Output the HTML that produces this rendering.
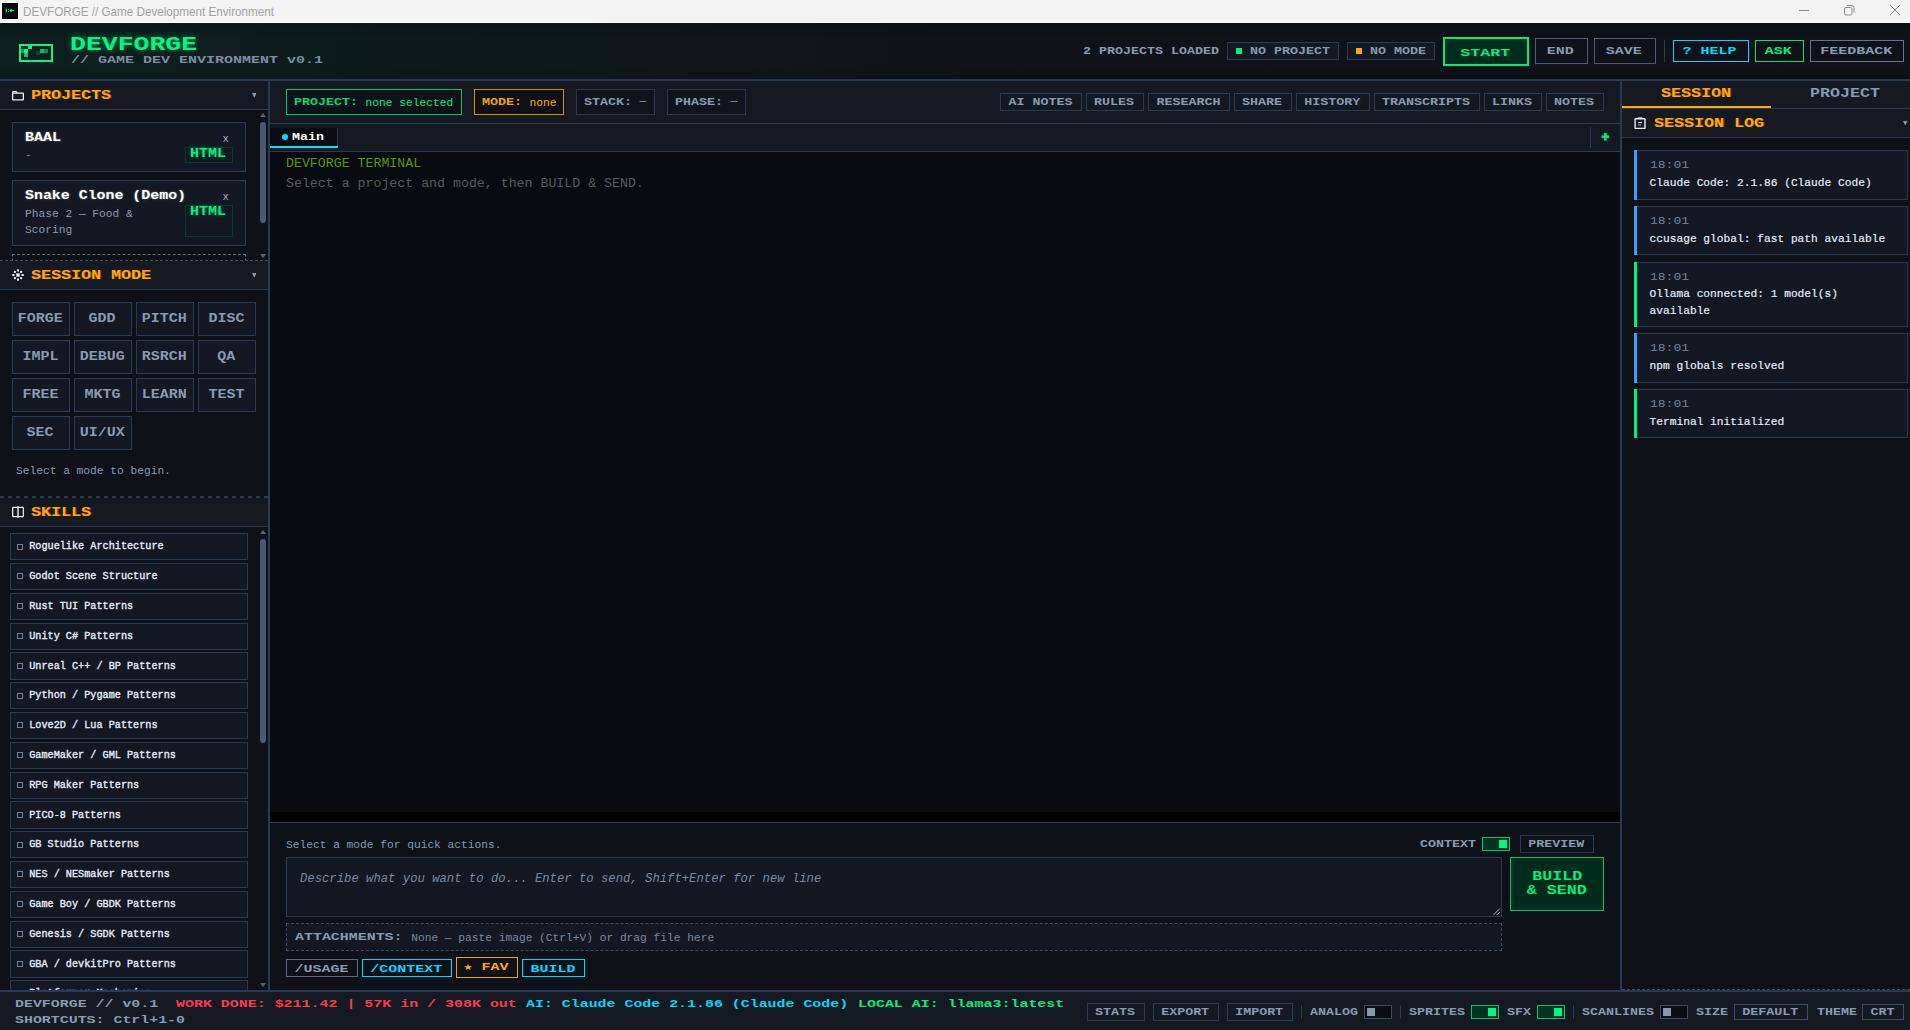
<!DOCTYPE html>
<html lang="en"><head><meta charset="utf-8"><title>DEVFORGE // Game Development Environment</title><style>
html,body{margin:0;padding:0}
body{width:1910px;height:1030px;position:relative;overflow:hidden;background:#0e1118}
.a{position:absolute;box-sizing:content-box}
.p{font-family:"Liberation Mono",monospace;font-weight:bold;white-space:pre;line-height:1;transform-origin:0 50%;display:inline-block}
.p.c{position:static;transform-origin:50% 50%}
.m{font-family:"Liberation Mono",monospace;white-space:pre;line-height:1}
.b{display:flex;align-items:center;justify-content:center}
</style></head>
<body>
<div class="a" style="left:0px;top:0px;width:1910px;height:22px;background:#f3f3f3;"></div>
<div class="a" style="left:0px;top:22px;width:1910px;height:1px;background:#ffffff;"></div>
<div class="a" style="left:2px;top:3px;width:14px;height:14px;background:#0a0b10;border:1px solid #000;box-shadow:0 0 0 1px #fff;"><svg width="14" height="14" viewBox="3 4 14 14" style="display:block"><g fill="#00f080"><rect x="5.7" y="8.7" width="1.3" height="3.5"/><rect x="8" y="8.8" width="1" height="1"/><rect x="8" y="11.1" width="1" height="1"/><path d="M9.3 10.5L11 8.8L12.7 10L14.2 10V11L12.7 11L11 12.2Z"/></g></svg></div>
<span class="a" id="wtitle" style="left:23px;top:4px;font:13.2px/16px 'Liberation Sans',sans-serif;color:#a2a2a2;white-space:pre;transform:scaleX(0.885);transform-origin:0 50%">DEVFORGE // Game Development Environment</span>
<svg class="a" style="left:1795px;top:0" width="115" height="22" viewBox="0 0 115 22" fill="none" stroke="#8a8a8a" stroke-width="1"><path d="M4 10.5h10"/><rect x="49.5" y="7.5" width="7.5" height="7.5" rx="1.5"/><path d="M52 5.5h5a2 2 0 0 1 2 2V12.5"/><path d="M95 5l10 10M105 5l-10 10"/></svg>
<div class="a" style="left:0px;top:23px;width:1910px;height:56px;background:#0f1218;background:linear-gradient(90deg,rgba(0,255,136,0.05) 0%,rgba(0,255,136,0.042) 15%,rgba(0,255,136,0) 52%),linear-gradient(180deg,rgba(0,0,0,0.18),rgba(0,0,0,0) 30%,rgba(0,0,0,0) 75%,rgba(0,0,0,0.12)),#0f1218;"></div>
<div class="a" style="left:0px;top:79px;width:1910px;height:2px;background:#2a3a50;"></div>
<svg class="a" style="left:19px;top:44px" width="34" height="18" viewBox="0 0 34 18"><rect x="1" y="1" width="32" height="16" fill="none" stroke="#00fa85" stroke-width="2"/><rect x="9" y="2" width="4" height="3" fill="#00fa85"/><rect x="5" y="5" width="4" height="4" fill="#00fa85"/><rect x="2" y="5" width="3" height="4" fill="#00a85c"/><rect x="5" y="9" width="4" height="4" fill="#00c86e"/><rect x="17" y="7" width="4" height="4" fill="#00482a"/><rect x="21" y="5" width="4" height="4" fill="#00c06a"/><rect x="25" y="5" width="4" height="4" fill="#008e4e"/></svg>
<span class="a p" style="left:69.6px;top:35.12px;font-size:20.34px;color:#00f882;transform:scaleX(1.3024);text-shadow:0 0 6px rgba(0,255,136,.45);">DEVFORGE</span>
<span class="a p" style="left:70.6px;top:55.16px;font-size:10.63px;color:#7d8ca4;transform:scaleX(1.4113);">// GAME DEV ENVIRONMENT v0.1</span>
<span class="a p" style="left:1083px;top:45.86px;font-size:10.63px;color:#8a9ab0;transform:scaleX(1.2545);">2 PROJECTS LOADED</span>
<div class="a" style="left:1227px;top:42px;width:110px;height:16px;background:#141922;border:1px solid #2a3a50;"></div>
<div class="a" style="left:1236px;top:48px;width:6px;height:6px;background:#00f07c;"></div>
<span class="a p" style="left:1250px;top:45.86px;font-size:10.63px;color:#8a9ab0;transform:scaleX(1.2545);">NO PROJECT</span>
<div class="a" style="left:1347px;top:42px;width:86px;height:16px;background:#141922;border:1px solid #2a3a50;"></div>
<div class="a" style="left:1356px;top:48px;width:6px;height:6px;background:#ffaa00;"></div>
<span class="a p" style="left:1370px;top:45.86px;font-size:10.63px;color:#8a9ab0;transform:scaleX(1.2545);">NO MODE</span>
<div class="a b" style="left:1443px;top:37px;width:82px;height:25px;background:#012c1d;border:2px solid #00ec7a;"><span class="p c" style="font-size:11.54px;color:#00f07c;transform:scaleX(1.4443);position:relative;left:-0.6px;top:1.1px;">START</span></div>
<div class="a b" style="left:1535px;top:38px;width:51px;height:24px;background:transparent;border:1px solid #4c5b72;"><span class="p c" style="font-size:11.39px;color:#8a9ab0;transform:scaleX(1.3172);position:relative;left:-1.2px;top:1px;">END</span></div>
<div class="a b" style="left:1594px;top:38px;width:60px;height:24px;background:transparent;border:1px solid #4c5b72;"><span class="p c" style="font-size:11.39px;color:#8a9ab0;transform:scaleX(1.3172);position:relative;left:-1.2px;top:1px;">SAVE</span></div>
<div class="a" style="left:1664px;top:40px;width:1px;height:22px;background:#2a3a50;"></div>
<div class="a b" style="left:1673px;top:40px;width:74px;height:20px;background:transparent;border:1px solid #00d8ff;"><span class="p c" style="font-size:11.39px;color:#00d8ff;transform:scaleX(1.3172);position:relative;left:-1.2px;top:1px;">? HELP</span></div>
<div class="a b" style="left:1755px;top:40px;width:47px;height:20px;background:transparent;border:1px solid #00e676;"><span class="p c" style="font-size:11.39px;color:#00f07c;transform:scaleX(1.3172);position:relative;left:-1.2px;top:1px;">ASK</span></div>
<div class="a b" style="left:1810px;top:40px;width:92px;height:20px;background:transparent;border:1px solid #66758c;"><span class="p c" style="font-size:11.39px;color:#8a9ab0;transform:scaleX(1.3172);position:relative;left:-1.2px;top:1px;">FEEDBACK</span></div>
<div class="a" style="left:0px;top:81px;width:268px;height:909px;background:#0e1118;"></div>
<div class="a" style="left:268px;top:81px;width:2px;height:909px;background:#2a3a50;"></div>
<div class="a" style="left:0px;top:81px;width:268px;height:28px;background:#141922;"></div>
<div class="a" style="left:0px;top:109px;width:268px;height:1px;background:#2a3a50;"></div>
<svg class="a" style="left:11px;top:90px" width="14" height="12" viewBox="0 0 14 12" fill="none" stroke="#e8edf7" stroke-width="1.3"><rect x="1.65" y="3.15" width="10.7" height="6.8" rx="0.5"/><path d="M1.65 3.2V2.1Q1.65 1.6 2.2 1.6H5.2L6.3 3" stroke-width="1.1"/></svg>
<span class="a p" style="left:31px;top:89.71px;font-size:11.99px;color:#ffaa00;transform:scaleX(1.3894);text-shadow:0.7px 0.4px 0 rgba(205,70,0,.7);">PROJECTS</span>
<svg class="a" style="left:251.5px;top:93.3px" width="4.6" height="4.8" viewBox="0 0 5 5" preserveAspectRatio="none"><path d="M0 0h5L2.5 5z" fill="#8796ad"/></svg>
<div class="a" style="left:12px;top:122px;width:232px;height:48px;background:#141822;border:1px solid #2a3a50;"></div>
<span class="a p" style="left:24.5px;top:132.00px;font-size:12.15px;color:#ffffff;transform:scaleX(1.2349);text-shadow:0 0 2px rgba(255,255,255,.4);">BAAL</span>
<span class="a m " style="left:25px;top:150.00px;font-size:11.22px;color:#7a8aa0;">-</span>
<span class="a m " style="left:222.6px;top:133.96px;font-size:10.5px;color:#a8b4c8;">x</span>
<div class="a" style="left:185px;top:147px;width:46px;height:14px;border:1px solid #0a3a28;"></div>
<span class="a p" style="left:190.3px;top:147.80px;font-size:12.15px;color:#00f07c;transform:scaleX(1.2349);text-shadow:0 0 3px rgba(0,255,136,.4);">HTML</span>
<div class="a" style="left:12px;top:180px;width:232px;height:64px;background:#141822;border:1px solid #2a3a50;"></div>
<span class="a p" style="left:24.5px;top:189.80px;font-size:12.15px;color:#ffffff;transform:scaleX(1.2280);text-shadow:0 0 2px rgba(255,255,255,.4);">Snake Clone (Demo)</span>
<span class="a m " style="left:25px;top:208.60px;font-size:11.22px;color:#8a9ab0;">Phase 2 — Food &amp;</span>
<span class="a m " style="left:25px;top:224.60px;font-size:11.22px;color:#8a9ab0;">Scoring</span>
<span class="a m " style="left:222.6px;top:191.96px;font-size:10.5px;color:#a8b4c8;">x</span>
<div class="a" style="left:185px;top:205px;width:46px;height:30px;border:1px solid #0a3a28;"></div>
<span class="a p" style="left:190.3px;top:205.80px;font-size:12.15px;color:#00f07c;transform:scaleX(1.2349);text-shadow:0 0 3px rgba(0,255,136,.4);">HTML</span>
<div class="a" style="left:12px;top:254px;width:232px;height:6px;border:1px dashed #5a6a82;border-bottom:none;"></div>
<svg class="a" style="left:260px;top:113px" width="6" height="4" viewBox="0 0 6 4"><path d="M0 4L3 0L6 4z" fill="#55637a"/></svg>
<div class="a" style="left:260px;top:122px;width:6px;height:101px;background:#4b586e;border-radius:3px;"></div>
<svg class="a" style="left:260px;top:253.5px" width="6" height="4" viewBox="0 0 6 4"><path d="M0 0h6L3 4z" fill="#55637a"/></svg>
<div class="a" style="left:0px;top:260px;width:268px;height:0px;border-top:1px dashed #3a4a62;"></div>
<div class="a" style="left:0px;top:261px;width:268px;height:28px;background:#141922;"></div>
<div class="a" style="left:0px;top:289px;width:268px;height:1px;background:#2a3a50;"></div>
<svg class="a" style="left:12px;top:269px" width="12" height="12" viewBox="0 0 12 12" fill="#e8edf7"><rect x="4.3" y="4.3" width="3.4" height="3.4" fill="#ffffff"/><rect x="5" y="0.3" width="2" height="2.2"/><rect x="5" y="9.5" width="2" height="2.2"/><rect x="0.3" y="5" width="2.2" height="2"/><rect x="9.5" y="5" width="2.2" height="2"/><rect x="1.9" y="1.9" width="2" height="2"/><rect x="8.1" y="1.9" width="2" height="2"/><rect x="1.9" y="8.1" width="2" height="2"/><rect x="8.1" y="8.1" width="2" height="2"/></svg>
<span class="a p" style="left:31px;top:269.71px;font-size:11.99px;color:#ffaa00;transform:scaleX(1.3894);text-shadow:0.7px 0.4px 0 rgba(205,70,0,.7);">SESSION MODE</span>
<svg class="a" style="left:251.5px;top:273.3px" width="4.6" height="4.8" viewBox="0 0 5 5" preserveAspectRatio="none"><path d="M0 0h5L2.5 5z" fill="#8796ad"/></svg>
<div class="a b" style="left:12px;top:302px;width:56px;height:32px;background:#141822;border:1px solid #2a3a50;"><span class="p c" style="font-size:12.15px;color:#8a9ab0;transform:scaleX(1.2349);position:relative;left:-0.8px;top:0px;">FORGE</span></div>
<div class="a b" style="left:74px;top:302px;width:56px;height:32px;background:#141822;border:1px solid #2a3a50;"><span class="p c" style="font-size:12.15px;color:#8a9ab0;transform:scaleX(1.2349);position:relative;left:-0.8px;top:0px;">GDD</span></div>
<div class="a b" style="left:136px;top:302px;width:56px;height:32px;background:#141822;border:1px solid #2a3a50;"><span class="p c" style="font-size:12.15px;color:#8a9ab0;transform:scaleX(1.2349);position:relative;left:-0.8px;top:0px;">PITCH</span></div>
<div class="a b" style="left:198px;top:302px;width:56px;height:32px;background:#141822;border:1px solid #2a3a50;"><span class="p c" style="font-size:12.15px;color:#8a9ab0;transform:scaleX(1.2349);position:relative;left:-0.8px;top:0px;">DISC</span></div>
<div class="a b" style="left:12px;top:340px;width:56px;height:32px;background:#141822;border:1px solid #2a3a50;"><span class="p c" style="font-size:12.15px;color:#8a9ab0;transform:scaleX(1.2349);position:relative;left:-0.8px;top:0px;">IMPL</span></div>
<div class="a b" style="left:74px;top:340px;width:56px;height:32px;background:#141822;border:1px solid #2a3a50;"><span class="p c" style="font-size:12.15px;color:#8a9ab0;transform:scaleX(1.2349);position:relative;left:-0.8px;top:0px;">DEBUG</span></div>
<div class="a b" style="left:136px;top:340px;width:56px;height:32px;background:#141822;border:1px solid #2a3a50;"><span class="p c" style="font-size:12.15px;color:#8a9ab0;transform:scaleX(1.2349);position:relative;left:-0.8px;top:0px;">RSRCH</span></div>
<div class="a b" style="left:198px;top:340px;width:56px;height:32px;background:#141822;border:1px solid #2a3a50;"><span class="p c" style="font-size:12.15px;color:#8a9ab0;transform:scaleX(1.2349);position:relative;left:-0.8px;top:0px;">QA</span></div>
<div class="a b" style="left:12px;top:378px;width:56px;height:32px;background:#141822;border:1px solid #2a3a50;"><span class="p c" style="font-size:12.15px;color:#8a9ab0;transform:scaleX(1.2349);position:relative;left:-0.8px;top:0px;">FREE</span></div>
<div class="a b" style="left:74px;top:378px;width:56px;height:32px;background:#141822;border:1px solid #2a3a50;"><span class="p c" style="font-size:12.15px;color:#8a9ab0;transform:scaleX(1.2349);position:relative;left:-0.8px;top:0px;">MKTG</span></div>
<div class="a b" style="left:136px;top:378px;width:56px;height:32px;background:#141822;border:1px solid #2a3a50;"><span class="p c" style="font-size:12.15px;color:#8a9ab0;transform:scaleX(1.2349);position:relative;left:-0.8px;top:0px;">LEARN</span></div>
<div class="a b" style="left:198px;top:378px;width:56px;height:32px;background:#141822;border:1px solid #2a3a50;"><span class="p c" style="font-size:12.15px;color:#8a9ab0;transform:scaleX(1.2349);position:relative;left:-0.8px;top:0px;">TEST</span></div>
<div class="a b" style="left:12px;top:416px;width:56px;height:32px;background:#141822;border:1px solid #2a3a50;"><span class="p c" style="font-size:12.15px;color:#8a9ab0;transform:scaleX(1.2349);position:relative;left:-0.8px;top:0px;">SEC</span></div>
<div class="a b" style="left:74px;top:416px;width:56px;height:32px;background:#141822;border:1px solid #2a3a50;"><span class="p c" style="font-size:12.15px;color:#8a9ab0;transform:scaleX(1.2349);position:relative;left:-0.8px;top:0px;">UI/UX</span></div>
<span class="a m " style="left:16px;top:465.70px;font-size:11.22px;color:#8a9ab0;">Select a mode to begin.</span>
<div class="a" style="left:0px;top:496px;width:268px;height:2px;background:repeating-linear-gradient(90deg,#2a3a50 0,#2a3a50 4px,transparent 4px,transparent 8px);"></div>
<div class="a" style="left:0px;top:498px;width:268px;height:28px;background:#141922;"></div>
<div class="a" style="left:0px;top:526px;width:268px;height:1px;background:#2a3a50;"></div>
<svg class="a" style="left:11px;top:505px" width="14" height="14" viewBox="0 0 14 14" fill="none" stroke="#e8edf7" stroke-width="1.3"><rect x="1.65" y="2.45" width="10.7" height="9.1" rx="0.6"/><path d="M7 1.3V12.7" stroke="#f0f4ff" stroke-width="1.4"/></svg>
<span class="a p" style="left:31px;top:506.71px;font-size:11.99px;color:#ffaa00;transform:scaleX(1.3894);text-shadow:0.7px 0.4px 0 rgba(205,70,0,.7);">SKILLS</span>
<div class="a" style="left:0;top:527px;width:268px;height:463px;overflow:hidden">
<div class="a" style="left:10px;top:6.20px;width:236px;height:25.2px;background:#141822;border:1px solid #2a3a50"></div>
<div class="a" style="left:17px;top:16.50px;width:4px;height:4px;border:1px solid #77859c"></div>
<span class="a m" style="left:29.2px;top:15.39px;font-size:10.2px;color:#e4ebf8;-webkit-text-stroke:0.35px #e4ebf8">Roguelike Architecture</span>
<div class="a" style="left:10px;top:36.00px;width:236px;height:25.2px;background:#141822;border:1px solid #2a3a50"></div>
<div class="a" style="left:17px;top:46.30px;width:4px;height:4px;border:1px solid #77859c"></div>
<span class="a m" style="left:29.2px;top:45.19px;font-size:10.2px;color:#e4ebf8;-webkit-text-stroke:0.35px #e4ebf8">Godot Scene Structure</span>
<div class="a" style="left:10px;top:65.80px;width:236px;height:25.2px;background:#141822;border:1px solid #2a3a50"></div>
<div class="a" style="left:17px;top:76.10px;width:4px;height:4px;border:1px solid #77859c"></div>
<span class="a m" style="left:29.2px;top:74.99px;font-size:10.2px;color:#e4ebf8;-webkit-text-stroke:0.35px #e4ebf8">Rust TUI Patterns</span>
<div class="a" style="left:10px;top:95.60px;width:236px;height:25.2px;background:#141822;border:1px solid #2a3a50"></div>
<div class="a" style="left:17px;top:105.90px;width:4px;height:4px;border:1px solid #77859c"></div>
<span class="a m" style="left:29.2px;top:104.79px;font-size:10.2px;color:#e4ebf8;-webkit-text-stroke:0.35px #e4ebf8">Unity C# Patterns</span>
<div class="a" style="left:10px;top:125.40px;width:236px;height:25.2px;background:#141822;border:1px solid #2a3a50"></div>
<div class="a" style="left:17px;top:135.70px;width:4px;height:4px;border:1px solid #77859c"></div>
<span class="a m" style="left:29.2px;top:134.59px;font-size:10.2px;color:#e4ebf8;-webkit-text-stroke:0.35px #e4ebf8">Unreal C++ / BP Patterns</span>
<div class="a" style="left:10px;top:155.20px;width:236px;height:25.2px;background:#141822;border:1px solid #2a3a50"></div>
<div class="a" style="left:17px;top:165.50px;width:4px;height:4px;border:1px solid #77859c"></div>
<span class="a m" style="left:29.2px;top:164.39px;font-size:10.2px;color:#e4ebf8;-webkit-text-stroke:0.35px #e4ebf8">Python / Pygame Patterns</span>
<div class="a" style="left:10px;top:185.00px;width:236px;height:25.2px;background:#141822;border:1px solid #2a3a50"></div>
<div class="a" style="left:17px;top:195.30px;width:4px;height:4px;border:1px solid #77859c"></div>
<span class="a m" style="left:29.2px;top:194.19px;font-size:10.2px;color:#e4ebf8;-webkit-text-stroke:0.35px #e4ebf8">Love2D / Lua Patterns</span>
<div class="a" style="left:10px;top:214.80px;width:236px;height:25.2px;background:#141822;border:1px solid #2a3a50"></div>
<div class="a" style="left:17px;top:225.10px;width:4px;height:4px;border:1px solid #77859c"></div>
<span class="a m" style="left:29.2px;top:223.99px;font-size:10.2px;color:#e4ebf8;-webkit-text-stroke:0.35px #e4ebf8">GameMaker / GML Patterns</span>
<div class="a" style="left:10px;top:244.60px;width:236px;height:25.2px;background:#141822;border:1px solid #2a3a50"></div>
<div class="a" style="left:17px;top:254.90px;width:4px;height:4px;border:1px solid #77859c"></div>
<span class="a m" style="left:29.2px;top:253.79px;font-size:10.2px;color:#e4ebf8;-webkit-text-stroke:0.35px #e4ebf8">RPG Maker Patterns</span>
<div class="a" style="left:10px;top:274.40px;width:236px;height:25.2px;background:#141822;border:1px solid #2a3a50"></div>
<div class="a" style="left:17px;top:284.70px;width:4px;height:4px;border:1px solid #77859c"></div>
<span class="a m" style="left:29.2px;top:283.59px;font-size:10.2px;color:#e4ebf8;-webkit-text-stroke:0.35px #e4ebf8">PICO-8 Patterns</span>
<div class="a" style="left:10px;top:304.20px;width:236px;height:25.2px;background:#141822;border:1px solid #2a3a50"></div>
<div class="a" style="left:17px;top:314.50px;width:4px;height:4px;border:1px solid #77859c"></div>
<span class="a m" style="left:29.2px;top:313.39px;font-size:10.2px;color:#e4ebf8;-webkit-text-stroke:0.35px #e4ebf8">GB Studio Patterns</span>
<div class="a" style="left:10px;top:334.00px;width:236px;height:25.2px;background:#141822;border:1px solid #2a3a50"></div>
<div class="a" style="left:17px;top:344.30px;width:4px;height:4px;border:1px solid #77859c"></div>
<span class="a m" style="left:29.2px;top:343.19px;font-size:10.2px;color:#e4ebf8;-webkit-text-stroke:0.35px #e4ebf8">NES / NESmaker Patterns</span>
<div class="a" style="left:10px;top:363.80px;width:236px;height:25.2px;background:#141822;border:1px solid #2a3a50"></div>
<div class="a" style="left:17px;top:374.10px;width:4px;height:4px;border:1px solid #77859c"></div>
<span class="a m" style="left:29.2px;top:372.99px;font-size:10.2px;color:#e4ebf8;-webkit-text-stroke:0.35px #e4ebf8">Game Boy / GBDK Patterns</span>
<div class="a" style="left:10px;top:393.60px;width:236px;height:25.2px;background:#141822;border:1px solid #2a3a50"></div>
<div class="a" style="left:17px;top:403.90px;width:4px;height:4px;border:1px solid #77859c"></div>
<span class="a m" style="left:29.2px;top:402.79px;font-size:10.2px;color:#e4ebf8;-webkit-text-stroke:0.35px #e4ebf8">Genesis / SGDK Patterns</span>
<div class="a" style="left:10px;top:423.40px;width:236px;height:25.2px;background:#141822;border:1px solid #2a3a50"></div>
<div class="a" style="left:17px;top:433.70px;width:4px;height:4px;border:1px solid #77859c"></div>
<span class="a m" style="left:29.2px;top:432.59px;font-size:10.2px;color:#e4ebf8;-webkit-text-stroke:0.35px #e4ebf8">GBA / devkitPro Patterns</span>
<div class="a" style="left:10px;top:453.20px;width:236px;height:25.2px;background:#141822;border:1px solid #2a3a50"></div>
<div class="a" style="left:17px;top:463.50px;width:4px;height:4px;border:1px solid #77859c"></div>
<span class="a m" style="left:29.2px;top:462.39px;font-size:10.2px;color:#e4ebf8;-webkit-text-stroke:0.35px #e4ebf8">Platformer Mechanics</span>
</div>
<svg class="a" style="left:260px;top:530px" width="6" height="4" viewBox="0 0 6 4"><path d="M0 4L3 0L6 4z" fill="#55637a"/></svg>
<div class="a" style="left:260px;top:539px;width:6px;height:204px;background:#4b586e;border-radius:3px;"></div>
<svg class="a" style="left:260px;top:983px" width="6" height="4" viewBox="0 0 6 4"><path d="M0 0h6L3 4z" fill="#55637a"/></svg>
<div class="a" style="left:270px;top:81px;width:1350px;height:42px;background:#141922;"></div>
<div class="a" style="left:270px;top:123px;width:1350px;height:1px;background:#2a3a50;"></div>
<div class="a" style="left:286px;top:89px;width:174px;height:24px;border:1px solid #00c46a;background:#0e1117"></div>
<span class="a p" style="left:294px;top:97.16px;font-size:10.63px;color:#00d873;transform:scaleX(1.2545);">PROJECT:</span>
<span class="a m " style="left:365.6px;top:97.80px;font-size:11.22px;color:#00f07c;">none selected</span>
<div class="a" style="left:474px;top:89px;width:88px;height:24px;border:1px solid #d88a08;background:#0f1116"></div>
<span class="a p" style="left:482px;top:97.16px;font-size:10.63px;color:#f0a000;transform:scaleX(1.2545);">MODE:</span>
<span class="a m " style="left:529.6px;top:97.80px;font-size:11.22px;color:#ffaa00;">none</span>
<div class="a" style="left:576px;top:89px;width:77px;height:24px;border:1px solid #2a3a50;background:#10141c"></div>
<span class="a p" style="left:584px;top:97.16px;font-size:10.63px;color:#8a9ab0;transform:scaleX(1.2545);">STACK:</span>
<span class="a m " style="left:639.6px;top:96.20px;font-size:11.22px;color:#8a9ab0;">—</span>
<div class="a" style="left:667px;top:89px;width:77px;height:24px;border:1px solid #2a3a50;background:#10141c"></div>
<span class="a p" style="left:675px;top:97.16px;font-size:10.63px;color:#8a9ab0;transform:scaleX(1.2545);">PHASE:</span>
<span class="a m " style="left:730.6px;top:96.20px;font-size:11.22px;color:#8a9ab0;">—</span>
<div class="a b" style="left:1000px;top:93px;width:80px;height:16px;background:#131821;border:1px solid #2a3a50;"><span class="p c" style="font-size:10.63px;color:#8a9ab0;transform:scaleX(1.2545);position:relative;left:-0.8px;top:0px;">AI NOTES</span></div>
<div class="a b" style="left:1086px;top:93px;width:56px;height:16px;background:#131821;border:1px solid #2a3a50;"><span class="p c" style="font-size:10.63px;color:#8a9ab0;transform:scaleX(1.2545);position:relative;left:-0.8px;top:0px;">RULES</span></div>
<div class="a b" style="left:1148px;top:93px;width:80px;height:16px;background:#131821;border:1px solid #2a3a50;"><span class="p c" style="font-size:10.63px;color:#8a9ab0;transform:scaleX(1.2545);position:relative;left:-0.8px;top:0px;">RESEARCH</span></div>
<div class="a b" style="left:1234px;top:93px;width:56px;height:16px;background:#131821;border:1px solid #2a3a50;"><span class="p c" style="font-size:10.63px;color:#8a9ab0;transform:scaleX(1.2545);position:relative;left:-0.8px;top:0px;">SHARE</span></div>
<div class="a b" style="left:1296px;top:93px;width:72px;height:16px;background:#131821;border:1px solid #2a3a50;"><span class="p c" style="font-size:10.63px;color:#8a9ab0;transform:scaleX(1.2545);position:relative;left:-0.8px;top:0px;">HISTORY</span></div>
<div class="a b" style="left:1374px;top:93px;width:104px;height:16px;background:#131821;border:1px solid #2a3a50;"><span class="p c" style="font-size:10.63px;color:#8a9ab0;transform:scaleX(1.2545);position:relative;left:-0.8px;top:0px;">TRANSCRIPTS</span></div>
<div class="a b" style="left:1484px;top:93px;width:56px;height:16px;background:#131821;border:1px solid #2a3a50;"><span class="p c" style="font-size:10.63px;color:#8a9ab0;transform:scaleX(1.2545);position:relative;left:-0.8px;top:0px;">LINKS</span></div>
<div class="a b" style="left:1546px;top:93px;width:56px;height:16px;background:#131821;border:1px solid #2a3a50;"><span class="p c" style="font-size:10.63px;color:#8a9ab0;transform:scaleX(1.2545);position:relative;left:-0.8px;top:0px;">NOTES</span></div>
<div class="a" style="left:270px;top:124px;width:1350px;height:27px;background:#141922;"></div>
<div class="a" style="left:270px;top:151px;width:1350px;height:1px;background:#2a3a50;"></div>
<div class="a" style="left:270px;top:128px;width:67px;height:18px;background:#0a0c11;"></div>
<div class="a" style="left:337px;top:128px;width:1px;height:20px;background:#2a3a50;"></div>
<div class="a" style="left:270px;top:146px;width:68px;height:2px;background:#00e0ff;"></div>
<div class="a" style="left:282px;top:134px;width:6px;height:6px;background:#00dcff;border-radius:50%;"></div>
<span class="a p" style="left:291.6px;top:131.86px;font-size:10.63px;color:#ffffff;transform:scaleX(1.2545);">Main</span>
<div class="a" style="left:1590px;top:127px;width:1px;height:21px;background:#2a3a50;"></div>
<span class="a m" style="left:1601.4px;top:131.1px;font-size:13px;font-weight:bold;color:#00f07c;-webkit-text-stroke:0.9px #00f07c">+</span>
<div class="a" style="left:270px;top:152px;width:1350px;height:660px;background:#0a0b10;"></div>
<span class="a m " style="left:286px;top:156.85px;font-size:13.25px;color:#4f9a14;">DEVFORGE TERMINAL</span>
<span class="a m " style="left:286px;top:176.85px;font-size:13.25px;color:#5a5a5a;">Select a project and mode, then BUILD &amp; SEND.</span>
<div class="a" style="left:270px;top:812px;width:1350px;height:10px;background:#000000;"></div>
<div class="a" style="left:270px;top:822px;width:1350px;height:1px;background:#2a3a50;"></div>
<div class="a" style="left:270px;top:823px;width:1350px;height:167px;background:#0e1118;"></div>
<span class="a m " style="left:286px;top:839.70px;font-size:11.22px;color:#8a9ab0;">Select a mode for quick actions.</span>
<span class="a p" style="left:1419.5px;top:838.86px;font-size:10.63px;color:#8a9ab0;transform:scaleX(1.2545);">CONTEXT</span>
<div class="a" style="left:1482px;top:837px;width:26px;height:12px;background:#003322;border:1px solid #00c868;"></div>
<div class="a" style="left:1499px;top:840px;width:8px;height:8px;background:#00f882;"></div>
<div class="a b" style="left:1520px;top:835px;width:72px;height:16px;background:transparent;border:1px solid #2a3a50;"><span class="p c" style="font-size:10.63px;color:#8a9ab0;transform:scaleX(1.2545);position:relative;left:-0.8px;top:0px;">PREVIEW</span></div>
<div class="a" style="left:286px;top:857px;width:1214px;height:58px;background:#141822;border:1px solid #2a3a50;"></div>
<span class="a m " style="left:300px;top:872.62px;font-size:12.24px;color:#7a8aa0;font-style:italic;">Describe what you want to do... Enter to send, Shift+Enter for new line</span>
<svg class="a" style="left:1492px;top:907px" width="8" height="8" viewBox="0 0 8 8" stroke="#b8c2d2" stroke-width="1"><path d="M7.8 1.6L1.6 7.8M7.8 5L5 7.8"/></svg>
<div class="a b" style="left:1510px;top:857px;width:92px;height:52px;background:#012c1d;border:1px solid #00c868;flex-direction:column;line-height:14px"><span class="p c" style="font-size:12.15px;color:#00f07c;transform:scaleX(1.3721);line-height:14px;">BUILD</span><span class="p c" style="font-size:12.15px;color:#00f07c;transform:scaleX(1.3721);line-height:14px;">&amp; SEND</span></div>
<div class="a" style="left:286px;top:923px;width:1214px;height:26px;background:#141822;border:1px dashed #3c4c64;"></div>
<span class="a p" style="left:294.6px;top:931.93px;font-size:11.84px;color:#8a9ab0;transform:scaleX(1.2623);">ATTACHMENTS:</span>
<span class="a m " style="left:411.2px;top:932.70px;font-size:11.22px;color:#7a8aa0;">None — paste image (Ctrl+V) or drag file here</span>
<div class="a b" style="left:286px;top:959px;width:70px;height:16px;background:transparent;border:1px solid #5c6b82;"><span class="p c" style="font-size:11.39px;color:#8a9ab0;transform:scaleX(1.3172);position:relative;left:-0.8px;top:1.3px;">/USAGE</span></div>
<div class="a b" style="left:362px;top:959px;width:88px;height:16px;background:transparent;border:1px solid #00d8ff;"><span class="p c" style="font-size:11.39px;color:#00d8ff;transform:scaleX(1.3172);position:relative;left:-0.8px;top:1.3px;">/CONTEXT</span></div>
<div class="a b" style="left:456px;top:957px;width:60px;height:19px;background:transparent;border:1px solid #e2a224;"><span class="p c" style="font-size:11.39px;color:#ffaa00;transform:scaleX(1.3172);position:relative;left:-0.8px;top:0px;">★ FAV</span></div>
<div class="a b" style="left:522px;top:959px;width:61px;height:16px;background:transparent;border:1px solid #00d8ff;"><span class="p c" style="font-size:11.39px;color:#00d8ff;transform:scaleX(1.3172);position:relative;left:-0.8px;top:1.3px;">BUILD</span></div>
<div class="a" style="left:1620px;top:81px;width:2px;height:909px;background:#2a3a50;"></div>
<div class="a" style="left:1622px;top:81px;width:288px;height:909px;background:#0e1118;"></div>
<div class="a" style="left:1622px;top:81px;width:288px;height:27px;background:#141922;"></div>
<div class="a" style="left:1622px;top:108px;width:288px;height:1px;background:#2a3a50;"></div>
<div class="a" style="left:1622px;top:106px;width:149px;height:2px;background:#ffaa00;"></div>
<span class="a p" style="left:1661px;top:87.81px;font-size:11.99px;color:#ffaa00;transform:scaleX(1.3894);text-shadow:0.7px 0.4px 0 rgba(205,70,0,.7);">SESSION</span>
<span class="a p" style="left:1810px;top:87.81px;font-size:11.99px;color:#8a9ab0;transform:scaleX(1.3894);">PROJECT</span>
<div class="a" style="left:1622px;top:109px;width:288px;height:28px;background:#141922;"></div>
<div class="a" style="left:1622px;top:137px;width:288px;height:1px;background:#2a3a50;"></div>
<svg class="a" style="left:1633px;top:116px" width="14" height="14" viewBox="0 0 14 14" fill="none" stroke="#e8edf7" stroke-width="1.4"><rect x="2.1" y="2.7" width="9.9" height="9.7" rx="0.5"/><path d="M4.8 1.9H9.4" stroke-width="1.2"/><path d="M5 6.6H9" stroke-width="1"/><path d="M5 8.9H8" stroke="#9aa4b6" stroke-width="1"/></svg>
<span class="a p" style="left:1654px;top:117.91px;font-size:11.99px;color:#ffaa00;transform:scaleX(1.3894);text-shadow:0.7px 0.4px 0 rgba(205,70,0,.7);">SESSION LOG</span>
<svg class="a" style="left:1903.4px;top:121.2px" width="4.6" height="4.6" viewBox="0 0 5 5" preserveAspectRatio="none"><path d="M0 0h5L2.5 5z" fill="#8796ad"/></svg>
<div class="a" style="left:1634px;top:150px;width:272px;height:48px;background:#141822;border:1px solid #2a3a50;"></div>
<div class="a" style="left:1634px;top:150px;width:3px;height:50px;background:#3d9cff;"></div>
<span class="a p" style="left:1649.5px;top:160.06px;font-size:10.63px;color:#74839a;transform:scaleX(1.2231);font-weight:normal;">18:01</span>
<span class="a m " style="left:1649.5px;top:177.70px;font-size:11.22px;color:#e4ebf8;-webkit-text-stroke:0.2px #e4ebf8;">Claude Code: 2.1.86 (Claude Code)</span>
<div class="a" style="left:1634px;top:206px;width:272px;height:47px;background:#141822;border:1px solid #2a3a50;"></div>
<div class="a" style="left:1634px;top:206px;width:3px;height:49px;background:#3d9cff;"></div>
<span class="a p" style="left:1649.5px;top:216.06px;font-size:10.63px;color:#74839a;transform:scaleX(1.2231);font-weight:normal;">18:01</span>
<span class="a m " style="left:1649.5px;top:233.70px;font-size:11.22px;color:#e4ebf8;-webkit-text-stroke:0.2px #e4ebf8;">ccusage global: fast path available</span>
<div class="a" style="left:1634px;top:261.5px;width:272px;height:63.5px;background:#141822;border:1px solid #2a3a50;"></div>
<div class="a" style="left:1634px;top:261.5px;width:3px;height:65.5px;background:#00f07c;"></div>
<span class="a p" style="left:1649.5px;top:271.56px;font-size:10.63px;color:#74839a;transform:scaleX(1.2231);font-weight:normal;">18:01</span>
<span class="a m " style="left:1649.5px;top:289.20px;font-size:11.22px;color:#e4ebf8;-webkit-text-stroke:0.2px #e4ebf8;">Ollama connected: 1 model(s)</span>
<span class="a m " style="left:1649.5px;top:305.80px;font-size:11.22px;color:#e4ebf8;-webkit-text-stroke:0.2px #e4ebf8;">available</span>
<div class="a" style="left:1634px;top:333px;width:272px;height:48px;background:#141822;border:1px solid #2a3a50;"></div>
<div class="a" style="left:1634px;top:333px;width:3px;height:50px;background:#3d9cff;"></div>
<span class="a p" style="left:1649.5px;top:343.06px;font-size:10.63px;color:#74839a;transform:scaleX(1.2231);font-weight:normal;">18:01</span>
<span class="a m " style="left:1649.5px;top:360.70px;font-size:11.22px;color:#e4ebf8;-webkit-text-stroke:0.2px #e4ebf8;">npm globals resolved</span>
<div class="a" style="left:1634px;top:389px;width:272px;height:47px;background:#141822;border:1px solid #2a3a50;"></div>
<div class="a" style="left:1634px;top:389px;width:3px;height:49px;background:#00f07c;"></div>
<span class="a p" style="left:1649.5px;top:399.06px;font-size:10.63px;color:#74839a;transform:scaleX(1.2231);font-weight:normal;">18:01</span>
<span class="a m " style="left:1649.5px;top:416.70px;font-size:11.22px;color:#e4ebf8;-webkit-text-stroke:0.2px #e4ebf8;">Terminal initialized</span>
<div class="a" style="left:1622px;top:989px;width:288px;height:0px;border-top:1px dashed #3a4a62;"></div>
<div class="a" style="left:0px;top:990px;width:1910px;height:2px;background:#2a3a50;"></div>
<div class="a" style="left:0px;top:992px;width:1910px;height:38px;background:#141922;"></div>
<span class="a p" style="left:15.3px;top:998.86px;font-size:10.63px;color:#8a9ab0;transform:scaleX(1.4034);">DEVFORGE // v0.1</span>
<span class="a p" style="left:175.6px;top:998.86px;font-size:10.63px;color:#ff3a48;transform:scaleX(1.4066);">WORK DONE: $211.42 | 57K in / 308K out</span>
<span class="a p" style="left:525.8px;top:998.86px;font-size:10.63px;color:#00d8ff;transform:scaleX(1.4034);">AI: Claude Code 2.1.86 (Claude Code)</span>
<span class="a p" style="left:858.2px;top:998.86px;font-size:10.63px;color:#00f07c;transform:scaleX(1.4066);">LOCAL AI: llama3:latest</span>
<span class="a p" style="left:15.3px;top:1014.86px;font-size:10.63px;color:#8a9ab0;transform:scaleX(1.4034);">SHORTCUTS: Ctrl+1-0</span>
<div class="a b" style="left:1087px;top:1003px;width:56px;height:16px;background:transparent;border:1px solid #2a3a50;"><span class="p c" style="font-size:10.63px;color:#8a9ab0;transform:scaleX(1.2545);position:relative;left:-0.8px;top:0px;">STATS</span></div>
<div class="a b" style="left:1153px;top:1003px;width:64px;height:16px;background:transparent;border:1px solid #2a3a50;"><span class="p c" style="font-size:10.63px;color:#8a9ab0;transform:scaleX(1.2545);position:relative;left:-0.8px;top:0px;">EXPORT</span></div>
<div class="a b" style="left:1227px;top:1003px;width:64px;height:16px;background:transparent;border:1px solid #2a3a50;"><span class="p c" style="font-size:10.63px;color:#8a9ab0;transform:scaleX(1.2545);position:relative;left:-0.8px;top:0px;">IMPORT</span></div>
<div class="a" style="left:1301px;top:1005px;width:1px;height:14px;background:#2a3a50;"></div>
<span class="a p" style="left:1310px;top:1006.86px;font-size:10.63px;color:#8a9ab0;transform:scaleX(1.2545);">ANALOG</span>
<div class="a" style="left:1364px;top:1005px;width:26px;height:12px;background:#0a0c10;border:1px solid #3a4a62;"></div>
<div class="a" style="left:1367px;top:1008px;width:8px;height:8px;background:#8a98ae;"></div>
<div class="a" style="left:1400px;top:1005px;width:1px;height:14px;background:#2a3a50;"></div>
<span class="a p" style="left:1408.5px;top:1006.86px;font-size:10.63px;color:#8a9ab0;transform:scaleX(1.2545);">SPRITES</span>
<div class="a" style="left:1471px;top:1005px;width:26px;height:12px;background:#003322;border:1px solid #00c868;"></div>
<div class="a" style="left:1488px;top:1008px;width:8px;height:8px;background:#00f882;"></div>
<span class="a p" style="left:1507px;top:1006.86px;font-size:10.63px;color:#8a9ab0;transform:scaleX(1.2545);">SFX</span>
<div class="a" style="left:1537px;top:1005px;width:26px;height:12px;background:#003322;border:1px solid #00c868;"></div>
<div class="a" style="left:1554px;top:1008px;width:8px;height:8px;background:#00f882;"></div>
<div class="a" style="left:1573px;top:1005px;width:1px;height:14px;background:#2a3a50;"></div>
<span class="a p" style="left:1582px;top:1006.86px;font-size:10.63px;color:#8a9ab0;transform:scaleX(1.2545);">SCANLINES</span>
<div class="a" style="left:1660px;top:1005px;width:26px;height:12px;background:#0a0c10;border:1px solid #3a4a62;"></div>
<div class="a" style="left:1663px;top:1008px;width:8px;height:8px;background:#8a98ae;"></div>
<span class="a p" style="left:1696px;top:1006.86px;font-size:10.63px;color:#8a9ab0;transform:scaleX(1.2545);">SIZE</span>
<div class="a b" style="left:1734px;top:1004px;width:72px;height:14px;background:transparent;border:1px solid #3c4c64;"><span class="p c" style="font-size:10.63px;color:#8a9ab0;transform:scaleX(1.2545);position:relative;left:-0.8px;top:0px;">DEFAULT</span></div>
<span class="a p" style="left:1817px;top:1006.86px;font-size:10.63px;color:#8a9ab0;transform:scaleX(1.2545);">THEME</span>
<div class="a b" style="left:1862px;top:1004px;width:40px;height:14px;background:transparent;border:1px solid #3c4c64;"><span class="p c" style="font-size:10.63px;color:#8a9ab0;transform:scaleX(1.2545);position:relative;left:-0.8px;top:0px;">CRT</span></div>
</body></html>
